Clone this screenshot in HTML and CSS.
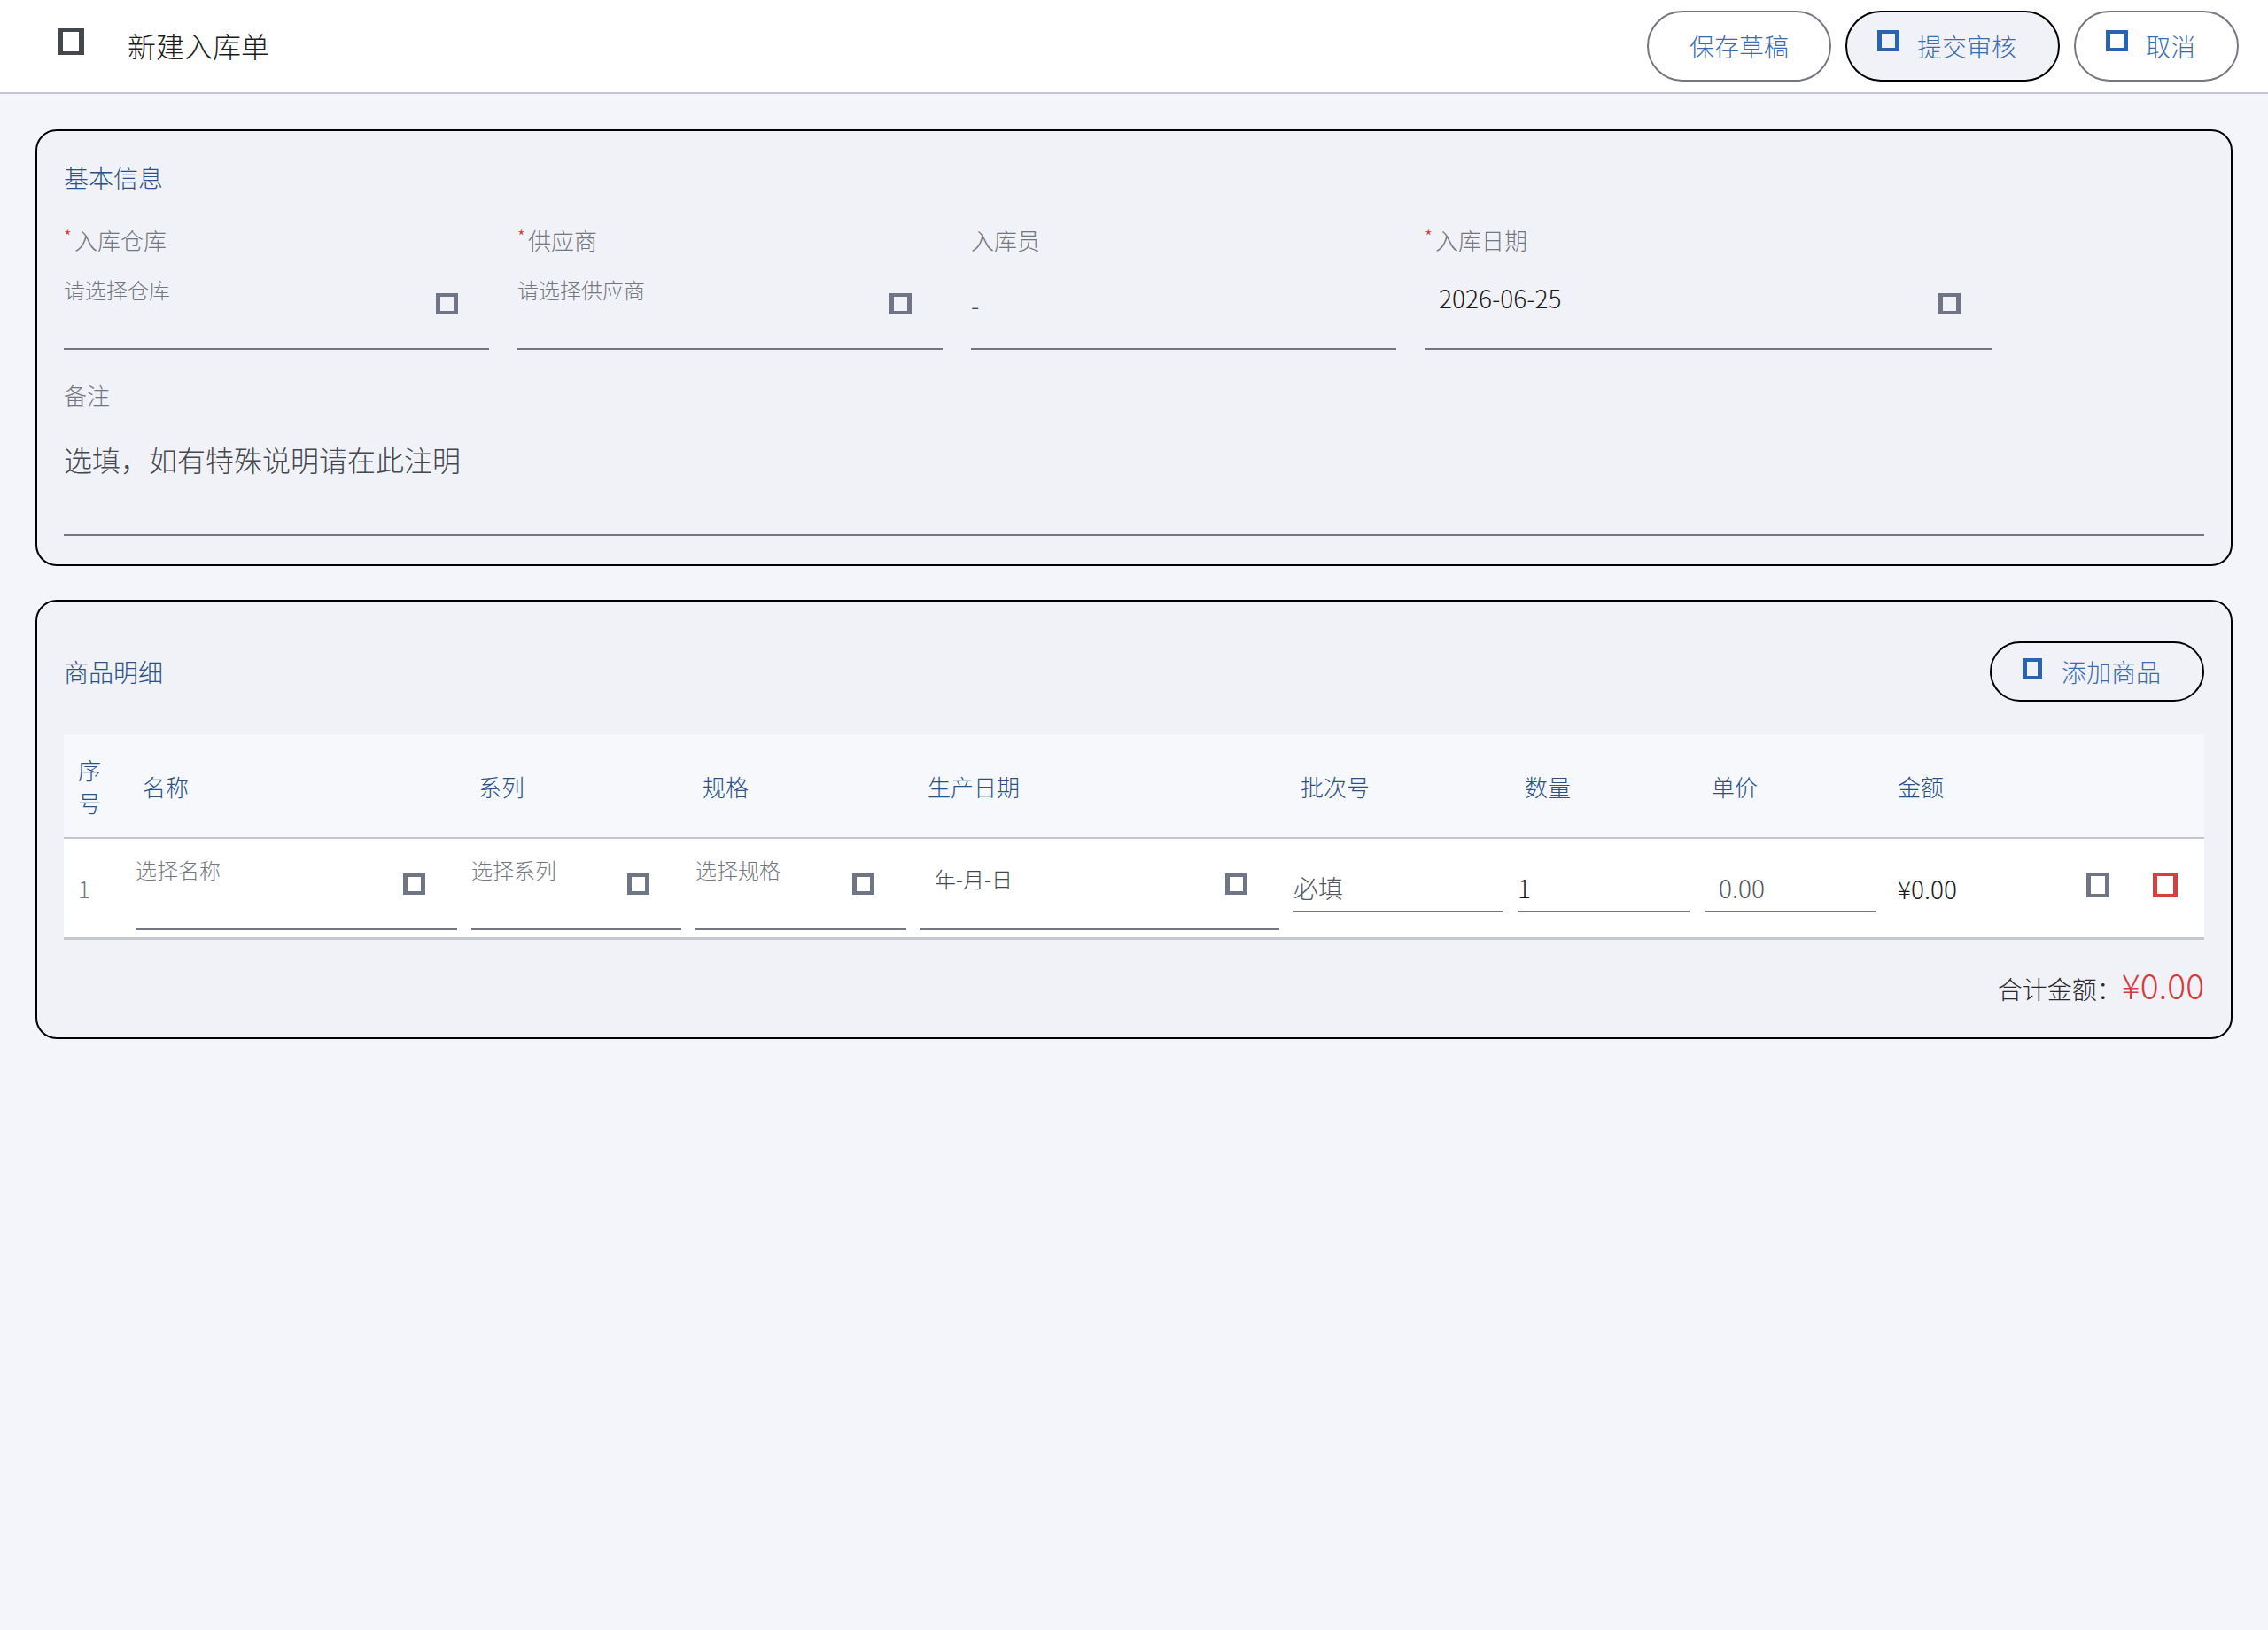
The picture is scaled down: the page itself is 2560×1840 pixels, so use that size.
FILE: index.html
```html
<!DOCTYPE html>
<html lang="zh-CN">
<head>
    <meta charset="UTF-8">
    <meta name="viewport" content="width=device-width, initial-scale=1.0">
    <title>新建入库单</title>
    <link rel="stylesheet" href="styles.css">
</head>
<body>
    <header class="topbar">
        <span class="tofu back-icon"></span>
        <h1 class="page-title">新建入库单</h1>
        <div class="top-actions">
            <button class="btn">保存草稿</button>
            <button class="btn has-icon primary"><span class="tofu"></span>提交审核</button>
            <button class="btn has-icon"><span class="tofu"></span>取消</button>
        </div>
    </header>

    <section class="card">
        <h2 class="card-title">基本信息</h2>
        <div class="form-grid">
            <div class="field">
                <div class="field-label"><span class="req">*</span>入库仓库</div>
                <div class="select">
                    <span class="placeholder">请选择仓库</span>
                    <span class="tofu"></span>
                </div>
            </div>
            <div class="field">
                <div class="field-label"><span class="req">*</span>供应商</div>
                <div class="select">
                    <span class="placeholder">请选择供应商</span>
                    <span class="tofu"></span>
                </div>
            </div>
            <div class="field">
                <div class="field-label">入库员</div>
                <div class="select">
                    <span class="dash">-</span>
                </div>
            </div>
            <div class="field">
                <div class="field-label"><span class="req">*</span>入库日期</div>
                <div class="select">
                    <span class="date-value">2026-06-25</span>
                    <span class="tofu"></span>
                </div>
            </div>
        </div>
        <div class="remark">
            <div class="field-label">备注</div>
            <div class="remark-input">选填，如有特殊说明请在此注明</div>
        </div>
    </section>

    <section class="card goods">
        <div class="card-head">
            <h2 class="card-title">商品明细</h2>
            <button class="btn has-icon small"><span class="tofu"></span>添加商品</button>
        </div>
        <table class="items">
            <colgroup>
                <col style="width: 73px">
                <col style="width: 379px">
                <col style="width: 253px">
                <col style="width: 254px">
                <col style="width: 421px">
                <col style="width: 253px">
                <col style="width: 211px">
                <col style="width: 210px">
                <col style="width: 204px">
                <col style="width: 158px">
            </colgroup>
            <thead>
                <tr>
                    <th>序号</th>
                    <th>名称</th>
                    <th>系列</th>
                    <th>规格</th>
                    <th>生产日期</th>
                    <th>批次号</th>
                    <th>数量</th>
                    <th>单价</th>
                    <th>金额</th>
                    <th></th>
                </tr>
            </thead>
            <tbody>
                <tr>
                    <td class="idx">1</td>
                    <td>
                        <div class="cell-select">
                            <span class="placeholder">选择名称</span>
                            <span class="tofu"></span>
                        </div>
                    </td>
                    <td>
                        <div class="cell-select">
                            <span class="placeholder">选择系列</span>
                            <span class="tofu"></span>
                        </div>
                    </td>
                    <td>
                        <div class="cell-select">
                            <span class="placeholder">选择规格</span>
                            <span class="tofu"></span>
                        </div>
                    </td>
                    <td>
                        <div class="cell-select">
                            <span class="date-ph">年-月-日</span>
                            <span class="tofu"></span>
                        </div>
                    </td>
                    <td><div class="cell-input muted">必填</div></td>
                    <td><div class="cell-input">1</div></td>
                    <td><div class="cell-input muted price">0.00</div></td>
                    <td class="amount">¥0.00</td>
                    <td class="ops">
                        <div class="ops-wrap">
                            <span class="tofu op"></span>
                            <span class="tofu op danger"></span>
                        </div>
                    </td>
                </tr>
            </tbody>
        </table>
        <div class="total">合计金额：<span class="total-amount">¥0.00</span></div>
    </section>
</body>
</html>
```

FILE: styles.css
```css
body {
    margin: 0;
    background-color: #f4f5fa;
    font-family: "Noto Sans CJK SC", "Noto Sans", sans-serif;
    font-weight: 300;
    color: #1b1b1f;
}

/* missing icon glyphs render as hollow boxes */
.tofu {
    display: inline-block;
    flex: none;
    box-sizing: border-box;
    width: 25px;
    height: 24px;
    border: 4px solid currentColor;
    border-left-width: 5px;
    border-right-width: 5px;
}

.topbar {
    display: flex;
    align-items: center;
    height: 104px;
    padding: 0 33px 0 65px;
    background-color: #fff;
    border-bottom: 2px solid #c4c6d0;
}
.back-icon {
    width: 30px;
    height: 30px;
    border-width: 4px 6px;
    color: #44474e;
    margin-bottom: 10px;
}
.page-title {
    margin: 0 0 2px 49px;
    font-size: 32px;
    font-weight: 300;
    color: #1d1b20;
}
.top-actions {
    margin-left: auto;
    display: flex;
    gap: 16px;
}

.btn {
    display: flex;
    align-items: center;
    gap: 20px;
    height: 80px;
    box-sizing: border-box;
    padding: 0 46px;
    border: 2px solid #74777f;
    border-radius: 40px;
    background-color: #fff;
    color: #3c6cae;
    font-family: inherit;
    font-weight: 300;
    font-size: 28px;
    cursor: pointer;
}
.btn .tofu {
    color: #2a63b0;
    margin-bottom: 12px;
}
.btn.has-icon {
    padding: 0 47px 0 34px;
}
.btn.primary {
    border-color: #000;
    background-color: #f1f2f8;
}
.btn.small {
    height: 68px;
    border-radius: 34px;
    border-color: #000;
    background-color: transparent;
    padding: 0 47px 0 35px;
    gap: 22px;
}
.btn.small .tofu {
    width: 22px;
    margin-bottom: 6px;
}

.card {
    margin: 40px 40px 0;
    padding: 32px 30px;
    border: 2px solid #000;
    border-radius: 24px;
    background-color: #f1f2f8;
}
.card.goods {
    margin-top: 38px;
}
.card-title {
    margin: 0;
    font-size: 28px;
    font-weight: 300;
    color: #2b5287;
}

.form-grid {
    display: grid;
    grid-template-columns: 480px 480px 480px 640px;
    column-gap: 32px;
    margin-top: 32px;
}
.field-label {
    font-size: 26px;
    color: #73777f;
}
.req {
    color: #d93025;
    font-size: 20px;
    vertical-align: top;
    margin-right: 3px;
}
.select {
    display: flex;
    justify-content: space-between;
    align-items: flex-start;
    height: 106px;
    box-sizing: border-box;
    border-bottom: 2px solid #74777f;
}
.select .placeholder {
    font-size: 24px;
    color: #73777f;
    padding-top: 20px;
}
.select .tofu {
    margin: 42px 35px 0 0;
    color: #6f7585;
}
.date-value {
    font-size: 28px;
    padding: 27px 0 0 16px;
    color: #1b1b1f;
}
.dash {
    font-size: 28px;
    padding-top: 35px;
    color: #44474e;
}

.remark {
    margin-top: 32px;
}
.remark-input {
    font-size: 32px;
    color: #44474e;
    padding: 31px 0 62px;
    border-bottom: 2px solid #74777f;
}

.card-head {
    display: flex;
    justify-content: space-between;
    align-items: center;
    min-height: 94px;
    margin-bottom: 24px;
}

.items {
    width: 100%;
    border-collapse: collapse;
    table-layout: fixed;
}
.items thead tr {
    background-color: #f7f8fc;
}
.items th {
    height: 116px;
    padding: 0 16px;
    font-size: 26px;
    font-weight: 300;
    color: #2b5287;
    text-align: left;
    border-bottom: 2px solid #c6c7d0;
}
.items tbody tr {
    background-color: #fff;
}
.items td {
    padding: 8px;
    vertical-align: middle;
    border-bottom: 3px solid #c6c7d0;
}
.items td.idx {
    padding-left: 16px;
    font-size: 26px;
    color: #74777f;
}
.cell-select {
    display: flex;
    justify-content: space-between;
    align-items: flex-start;
    height: 95px;
    box-sizing: border-box;
    border-bottom: 2px solid #74777f;
}
.cell-select .placeholder {
    font-size: 24px;
    color: #74777f;
    padding-top: 9px;
}
.cell-select .tofu {
    margin: 31px 36px 0 0;
    color: #6f7585;
}
.date-ph {
    font-size: 24px;
    color: #44474e;
    padding: 19px 0 0 16px;
}
.cell-input {
    display: flex;
    align-items: center;
    height: 54px;
    box-sizing: border-box;
    border-bottom: 2px solid #74777f;
    font-size: 28px;
    color: #1b1b1f;
}
.cell-input.muted {
    color: #55585f;
}
.cell-input.price {
    padding-left: 16px;
}
.items td.amount {
    padding-left: 16px;
    font-size: 28px;
    color: #1b1b1f;
}
.items td.ops {
    padding-right: 30px;
}
.ops-wrap {
    display: flex;
    justify-content: flex-end;
    gap: 49px;
}
.tofu.op {
    width: 26px;
    height: 28px;
    color: #6f7585;
    margin-bottom: 8px;
}
.tofu.op.danger {
    width: 28px;
    color: #d43f3f;
}

.total {
    margin-top: 22px;
    text-align: right;
    font-size: 28px;
    color: #2a2a2e;
}
.total-amount {
    font-size: 39px;
    color: #d63b3b;
}
```
